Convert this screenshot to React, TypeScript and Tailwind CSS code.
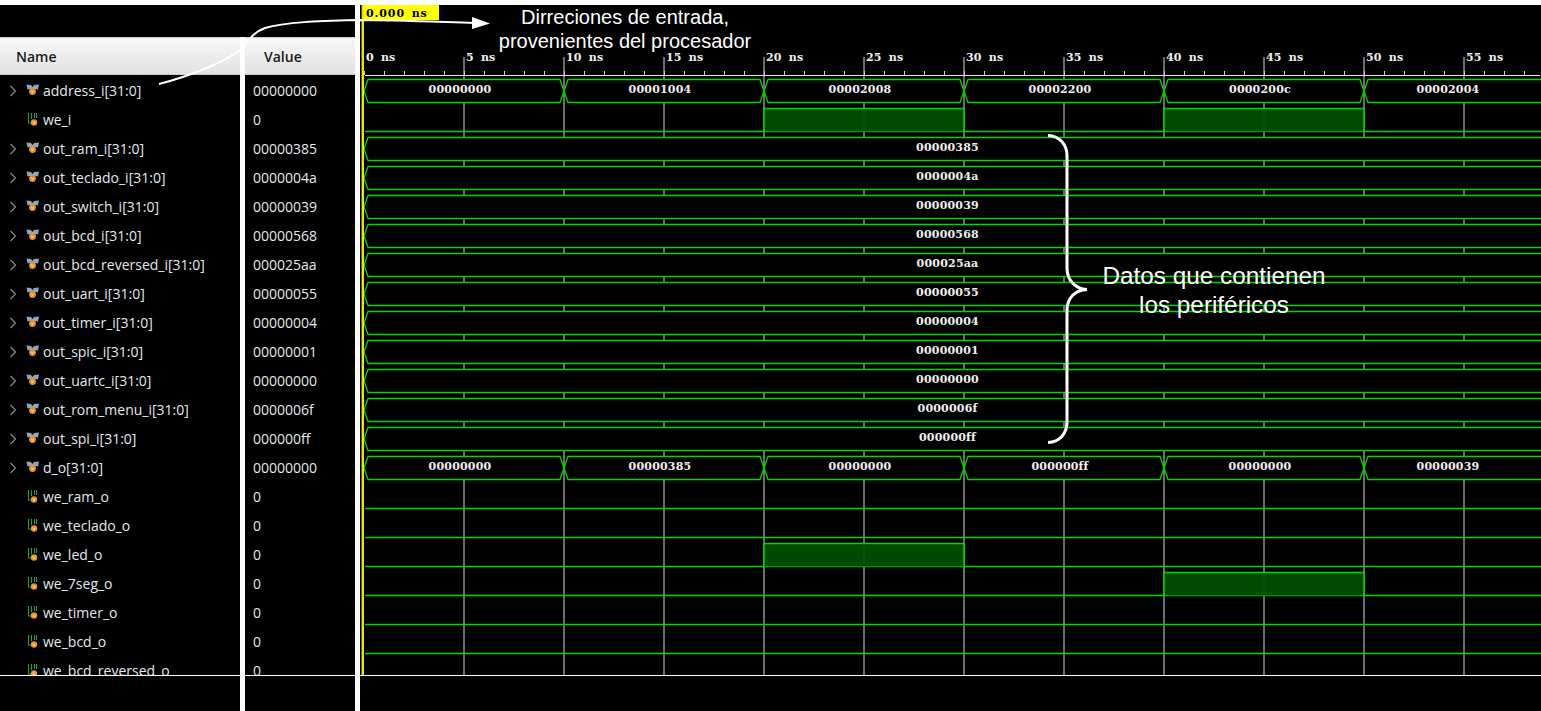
import React from 'react';

type Signal = { name: string; value: string; bus?: boolean };

const signals: Signal[] = [
  { name: 'address_i[31:0]', value: '00000000', bus: true },
  { name: 'we_i', value: '0' },
  { name: 'out_ram_i[31:0]', value: '00000385', bus: true },
  { name: 'out_teclado_i[31:0]', value: '0000004a', bus: true },
  { name: 'out_switch_i[31:0]', value: '00000039', bus: true },
  { name: 'out_bcd_i[31:0]', value: '00000568', bus: true },
  { name: 'out_bcd_reversed_i[31:0]', value: '000025aa', bus: true },
  { name: 'out_uart_i[31:0]', value: '00000055', bus: true },
  { name: 'out_timer_i[31:0]', value: '00000004', bus: true },
  { name: 'out_spic_i[31:0]', value: '00000001', bus: true },
  { name: 'out_uartc_i[31:0]', value: '00000000', bus: true },
  { name: 'out_rom_menu_i[31:0]', value: '0000006f', bus: true },
  { name: 'out_spi_i[31:0]', value: '000000ff', bus: true },
  { name: 'd_o[31:0]', value: '00000000', bus: true },
  { name: 'we_ram_o', value: '0' },
  { name: 'we_teclado_o', value: '0' },
  { name: 'we_led_o', value: '0' },
  { name: 'we_7seg_o', value: '0' },
  { name: 'we_timer_o', value: '0' },
  { name: 'we_bcd_o', value: '0' },
  { name: 'we_bcd_reversed_o', value: '0' },
];

const GREEN = '#00d800';
const ticks = Array.from({ length: 60 }, (_, i) => 364 + i * 20).filter(x => x < 1540);
const majors = Array.from({ length: 12 }, (_, i) => 364 + i * 100);
const edges = [364, 564, 764, 964, 1164, 1364, 1564];

const addressVals = ['00000000', '00001004', '00002008', '00002200', '0000200c', '00002004'];
const dataVals = ['00000000', '00000385', '00000000', '000000ff', '00000000', '00000039'];

const highs: Record<number, [number, number][]> = {
  1: [[764, 964], [1164, 1364]],
  16: [[764, 964]],
  17: [[1164, 1364]],
};

const waveFont = { fontFamily: '"DejaVu Serif", serif', fontWeight: 700 };

const BusIcon = () => (
  <svg width="14" height="14" viewBox="0 0 14 14" className="shrink-0">
    <path d="M0.5 0.5 L5 1 L6.5 3 L8 1 L13 0.5 L12 5.5 L9 5 L4 5 L1.5 5.5 Z" fill="#8da6bd" />
    <circle cx="6.5" cy="7.5" r="3.4" fill="#e8922a" />
    <path d="M5.3 6.5 L6.5 9 L7.7 6.5" fill="none" stroke="#ffe3b0" strokeWidth="0.8" />
  </svg>
);

const BitIcon = () => (
  <svg width="14" height="14" viewBox="0 0 14 14" className="shrink-0">
    <path d="M2.5 0 V10 H6 M5.5 0 V6 M8.5 0 V5 M10.5 0 V5" fill="none" stroke="#2f9a45" strokeWidth="1.1" />
    <circle cx="8" cy="9.5" r="3.2" fill="#e8922a" />
    <path d="M6.8 8.5 L8 11 L9.2 8.5" fill="none" stroke="#ffe3b0" strokeWidth="0.8" />
  </svg>
);

const Chevron = () => (
  <svg width="8" height="12" viewBox="0 0 8 12" className="shrink-0">
    <path d="M1.5 1 L6.5 6 L1.5 11" fill="none" stroke="#8a8a8a" strokeWidth="1.2" />
  </svg>
);

const BusSegment: React.FC<{ x1: number; x2: number; y: number; label?: string; labelX: number }> = ({ x1, x2, y, label, labelX }) => {
  const t = y;
  const b = y + 23;
  const m = y + 11.5;
  return (
    <g>
      <path
        d={`M${x1} ${m} L${x1 + 4} ${t} L${x2 - 4} ${t} L${x2} ${m} L${x2 - 4} ${b} L${x1 + 4} ${b} Z`}
        fill="#000"
        stroke={GREEN}
        strokeWidth="1.3"
      />
      {label && (
        <text x={labelX} y={y + 13} textAnchor="middle" fill="#f0f0f0" fontSize="11" letterSpacing="0.2" style={waveFont}>
          {label}
        </text>
      )}
    </g>
  );
};

const Waveform = () => (
  <svg width="1181" height="670" viewBox="360 5 1181 670" className="block">
    {/* grid */}
    {majors.slice(1).map(x => (
      <line key={x} x1={x} x2={x} y1="57" y2="675" stroke="#909090" strokeWidth="1.5" />
    ))}
    {/* time ruler */}
    <line x1="365" x2="1540" y1="75.5" y2="75.5" stroke="#e8e8e8" strokeWidth="1" />
    {ticks.map(x => (
      <line key={x} x1={x + 0.5} x2={x + 0.5} y1="71" y2="75" stroke="#d0d0d0" strokeWidth="1" />
    ))}
    {majors.map((x, i) => (
      <text key={x} x={x + 2} y="61" fill="#f0f0f0" fontSize="11" letterSpacing="0.2" wordSpacing="3" style={waveFont}>
        {`${i * 5} ns`}
      </text>
    ))}

    {signals.map((s, i) => {
      const y = 79.5 + 29 * i;
      const vals = i === 0 ? addressVals : i === 13 ? dataVals : null;
      if (vals) {
        return (
          <g key={s.name}>
            {edges.slice(0, -1).map((e, k) => (
              <BusSegment key={e} x1={e} x2={edges[k + 1]} y={y} label={vals[k]} labelX={k === 5 ? 1448 : e + 96} />
            ))}
          </g>
        );
      }
      if (s.bus) {
        return <BusSegment key={s.name} x1={364} x2={1600} y={y} label={s.value} labelX={947.5} />;
      }
      return (
        <g key={s.name}>
          <line x1="365" x2="1541" y1={y + 23} y2={y + 23} stroke={GREEN} strokeWidth="1.3" />
          {(highs[i] || []).map(([a, b]) => (
            <path
              key={a}
              d={`M${a} ${y + 23} V${y} H${b} V${y + 23}`}
              fill="#004f00"
              fillOpacity="0.92"
              stroke={GREEN}
              strokeWidth="1.5"
            />
          ))}
        </g>
      );
    })}

    {/* cursor */}
    <rect x="361" y="5" width="1" height="670" fill="#5a5a20" />
    <rect x="362" y="5" width="2" height="670" fill="#e8e800" />
    <rect x="364" y="5" width="75" height="15" fill="#ffff00" />
    <text x="366" y="17" fill="#000" fontSize="11" letterSpacing="0.9" wordSpacing="2" style={waveFont}>
      0.000 ns
    </text>
  </svg>
);

const App: React.FC = () => {
  return (
    <div className="relative h-[711px] w-[1541px] overflow-hidden bg-black" style={{ fontFamily: '"Open Sans", sans-serif' }}>
      <div className="h-[5px] bg-white" />
      <div className="flex h-[706px]">
        {/* name column */}
        <div className="flex w-[240px] flex-col">
          <div className="h-[32px]" />
          <div className="flex h-[38px] items-center border-y border-[#c8c8c8] bg-gradient-to-b from-[#f8f8f8] to-[#e2e2e2] pl-4 text-[14px] font-semibold text-[#1a1a1a]">
            Name
          </div>
          <div className="h-[600px] overflow-hidden pt-px">
            {signals.map(s => (
              <div key={s.name} className="flex h-[29px] items-center text-[14px] whitespace-nowrap text-[#e4e9ee]">
                <div className="flex w-[26px] justify-center">{s.bus && <Chevron />}</div>
                <div className="w-[17px]">{s.bus ? <BusIcon /> : <BitIcon />}</div>
                <span>{s.name}</span>
              </div>
            ))}
          </div>
          <div className="flex-1 border-t border-white" />
        </div>
        <div className="mt-[32px] w-[5px] bg-white" />

        {/* value column */}
        <div className="flex w-[110px] flex-col">
          <div className="h-[32px]" />
          <div className="flex h-[38px] items-center border-y border-[#c8c8c8] bg-gradient-to-b from-[#f8f8f8] to-[#e2e2e2] pl-[19px] text-[14px] font-semibold text-[#1a1a1a]">
            Value
          </div>
          <div className="h-[600px] overflow-hidden pt-px">
            {signals.map(s => (
              <div key={s.name} className="flex h-[29px] items-center pl-2 text-[14px] text-[#e4e9ee]">
                {s.value}
              </div>
            ))}
          </div>
          <div className="flex-1 border-t border-white" />
        </div>
        <div className="w-[5px] bg-white" />

        {/* wave panel */}
        <div className="flex flex-1 flex-col">
          <Waveform />
          <div className="flex-1 border-t border-white" />
        </div>
      </div>

      {/* annotations drawn over the capture */}
      <svg width="1541" height="711" className="pointer-events-none absolute inset-0">
        <path d="M159 84 C190 76 225 62 240 50 C250 40 252 33 265 28 C285 22 320 21 355 20 C400 20 440 22 474 23" fill="none" stroke="#fff" strokeWidth="2" />
        <path d="M472 17 L490 23.5 L472 29 Z" fill="#fff" />
        <path d="M1048 135.5 C1060 136 1067 145 1067 156 L1067 268 C1067 280 1075 289 1087 289.5 C1075 290 1067 298 1067 310 L1067 422 C1067 433 1060 442 1048 442.5" fill="none" stroke="#fff" strokeWidth="3" />
      </svg>
      <div className="absolute top-[5px] left-[460px] w-[330px] text-center text-[20px] leading-[24px] text-white" style={{ fontFamily: '"Liberation Sans", sans-serif' }}>
        <div>Dirreciones de entrada,</div>
        <div>provenientes del procesador</div>
      </div>
      <div className="absolute top-[261px] left-[1064px] w-[300px] text-center text-[24.3px] leading-[29px] text-white" style={{ fontFamily: '"Liberation Sans", sans-serif' }}>
        <div>Datos que contienen</div>
        <div>los periféricos</div>
      </div>
    </div>
  );
};

export default App;
